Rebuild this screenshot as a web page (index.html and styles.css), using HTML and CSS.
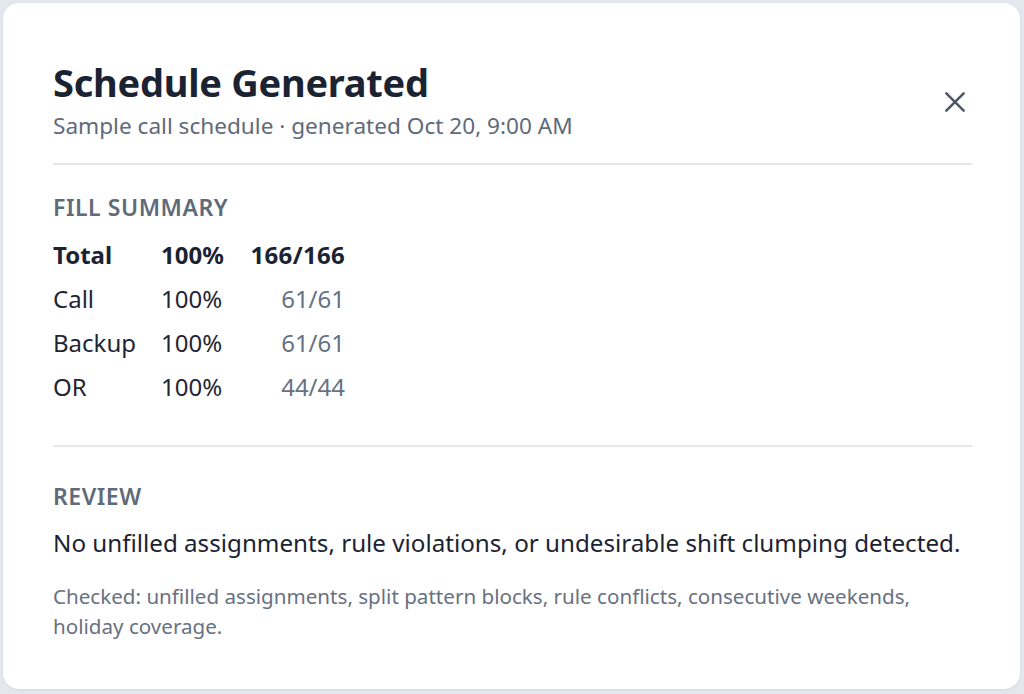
FILE: index.html
```html
<!DOCTYPE html>
<html lang="en">
<head>
<meta charset="utf-8">
<title>Schedule Generated</title>
<link rel="stylesheet" href="styles.css">
</head>
<body>
<div class="card">
  <header class="head">
    <div class="head-text">
      <h1 class="title">Schedule Generated</h1>
      <p class="subtitle">Sample call schedule · generated Oct 20, 9:00 AM</p>
    </div>
    <button class="close" aria-label="Close">
      <svg viewBox="0 0 24 24" width="26" height="26"><path d="M4 4 L20 20 M20 4 L4 20" stroke="#4b5563" stroke-width="2.3" stroke-linecap="round" fill="none"/></svg>
    </button>
  </header>
  <section class="section summary">
    <h2 class="label">Fill Summary</h2>
    <div class="grid">
      <div class="cell name strong">Total</div><div class="cell pct strong">100%</div><div class="cell frac strong">166/166</div>
      <div class="cell name">Call</div><div class="cell pct">100%</div><div class="cell frac">61/61</div>
      <div class="cell name">Backup</div><div class="cell pct">100%</div><div class="cell frac">61/61</div>
      <div class="cell name">OR</div><div class="cell pct">100%</div><div class="cell frac">44/44</div>
    </div>
  </section>
  <section class="section review">
    <h2 class="label">Review</h2>
    <p class="review-text">No unfilled assignments, rule violations, or undesirable shift clumping detected.</p>
    <p class="checked">Checked: unfilled assignments, split pattern blocks, rule conflicts, consecutive weekends, holiday coverage.</p>
  </section>
</div>
</body>
</html>
```
FILE: styles.css
```css
html, body {
  margin: 0;
  padding: 0;
  height: 100%;
}
body {
  background: #e4e8ee;
  font-family: "Noto Sans", "Open Sans", sans-serif;
  color: #1f2532;
  box-sizing: border-box;
  padding: 3px 4px 5px 3px;
}
.card {
  background: #ffffff;
  border-radius: 16px;
  height: 100%;
  box-sizing: border-box;
  padding: 54px 48px 0 50px;
  box-shadow: 0 1px 3px rgba(30, 40, 60, 0.08);
}
.head {
  display: flex;
  justify-content: space-between;
  align-items: center;
  padding-bottom: 22px;
  border-bottom: 2px solid #e4e7eb;
}
.title {
  margin: 0;
  font-size: 38px;
  line-height: 50px;
  font-weight: 700;
  color: #1b2333;
  letter-spacing: -0.25px;
}
.subtitle {
  margin: 4px 0 0;
  font-size: 22.6px;
  line-height: 30px;
  color: #5f6a7a;
}
.close {
  border: 0;
  background: none;
  padding: 0;
  margin: 6px -5px 0 0;
  width: 44px;
  height: 44px;
  display: flex;
  align-items: center;
  justify-content: center;
}
.summary {
  padding: 27px 0 37px;
  border-bottom: 2px solid #e4e7eb;
}
.review {
  padding: 34px 0 0;
}
.label {
  margin: 0 0 10px;
  font-size: 23px;
  line-height: 30px;
  font-weight: 600;
  text-transform: uppercase;
  color: #5f6a7a;
  letter-spacing: 0.55px;
}
.review .label {
  margin-bottom: 15px;
}
.grid {
  display: grid;
  grid-template-columns: 108px 63px 121px;
  grid-auto-rows: 44px;
  align-items: center;
}
.cell {
  font-size: 24px;
  color: #1f2532;
}
.frac {
  justify-self: end;
  color: #687181;
}
.strong {
  font-weight: 700;
  color: #1b2333;
}
.strong.frac {
  letter-spacing: 0.3px;
}
.review-text {
  margin: 0 0 21px;
  font-size: 24.2px;
  line-height: 34px;
  color: #1b2333;
}
.checked {
  margin: 0;
  font-size: 20.6px;
  line-height: 30px;
  color: #687181;
}
```
